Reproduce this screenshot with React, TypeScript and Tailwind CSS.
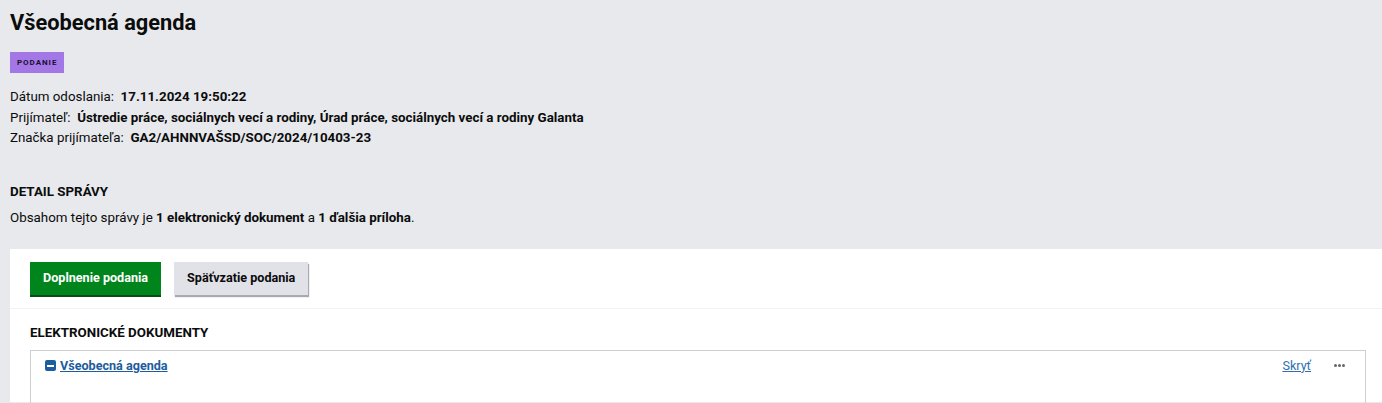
import React from "react";

export default function App() {
  return (
    <div className="min-h-[403px] bg-[#e8e9ec] text-[#0b0c0c] text-[13.35px]" style={{ fontFamily: "Roboto, 'Liberation Sans', sans-serif" }}>
      <div className="px-[10px] pt-[9px]">
        <h1 className="text-[21.8px] font-bold leading-[28px] m-0">Všeobecná agenda</h1>
        <div className="mt-[15px] inline-block bg-[#a477e6] px-[7px] h-[21px] leading-[21px] text-[8px] font-bold tracking-[0.12em] text-[#1a1030]">PODANIE</div>
        <div className="mt-[14px] leading-[20.5px]">
          <div>Dátum odoslania:&nbsp; <b>17.11.2024 19:50:22</b></div>
          <div>Prijímateľ:&nbsp; <b>Ústredie práce, sociálnych vecí a rodiny, Úrad práce, sociálnych vecí a rodiny Galanta</b></div>
          <div>Značka prijímateľa:&nbsp; <b>GA2/AHNNVAŠSD/SOC/2024/10403-23</b></div>
        </div>
        <div className="mt-[33px] font-bold text-[13.35px] leading-[20px]">DETAIL SPRÁVY</div>
        <div className="mt-[6px] leading-[20px]">
          Obsahom tejto správy je <b>1 elektronický dokument</b> a <b>1 ďalšia príloha</b>.
        </div>
      </div>
      <div className="ml-[10px] mt-[21px] bg-white h-[153px]">
        <div className="flex gap-[13px] px-[20px] pt-[13px] pb-[13px] border-b border-[#f2f2f2]">
          <button className="h-[33px] px-[13px] bg-[#00851d] text-white font-bold text-[12.6px] shadow-[0_2px_0_#0b4a17]">Doplnenie podania</button>
          <button className="h-[33px] px-[13px] bg-[#e1e1e8] text-[#0b0c0c] font-bold text-[12.6px] shadow-[1px_2px_1px_#a9a9b0]">Späťvzatie podania</button>
        </div>
        <div className="pl-[20px] pr-[16px]">
          <div className="mt-[15px] font-bold text-[13.35px] leading-[18px]">ELEKTRONICKÉ DOKUMENTY</div>
          <div className="mt-[8px] border border-[#cfcfd3] border-b-0 h-[60px] pl-[14px] pr-[20px] pt-[6px]">
            <div className="flex items-center justify-between">
              <a className="flex items-center gap-[4px] text-[#1d5c9e] font-bold underline text-[12.6px]" href="#">
                <span className="w-[11px] h-[11px] bg-[#1d5c9e] rounded-[2px] flex items-center justify-center">
                  <span className="block w-[7px] h-[2px] bg-white" />
                </span>
                Všeobecná agenda
              </a>
              <div className="flex items-center gap-[23px]">
                <a className="text-[#2f6fb0] underline text-[12.6px]" href="#">Skryť</a>
                <span className="flex gap-[1px]">
                  <span className="w-[3px] h-[3px] bg-[#666] rounded-full" />
                  <span className="w-[3px] h-[3px] bg-[#666] rounded-full" />
                  <span className="w-[3px] h-[3px] bg-[#666] rounded-full" />
                </span>
              </div>
            </div>
          </div>
        </div>
      </div>
    </div>
  );
}
